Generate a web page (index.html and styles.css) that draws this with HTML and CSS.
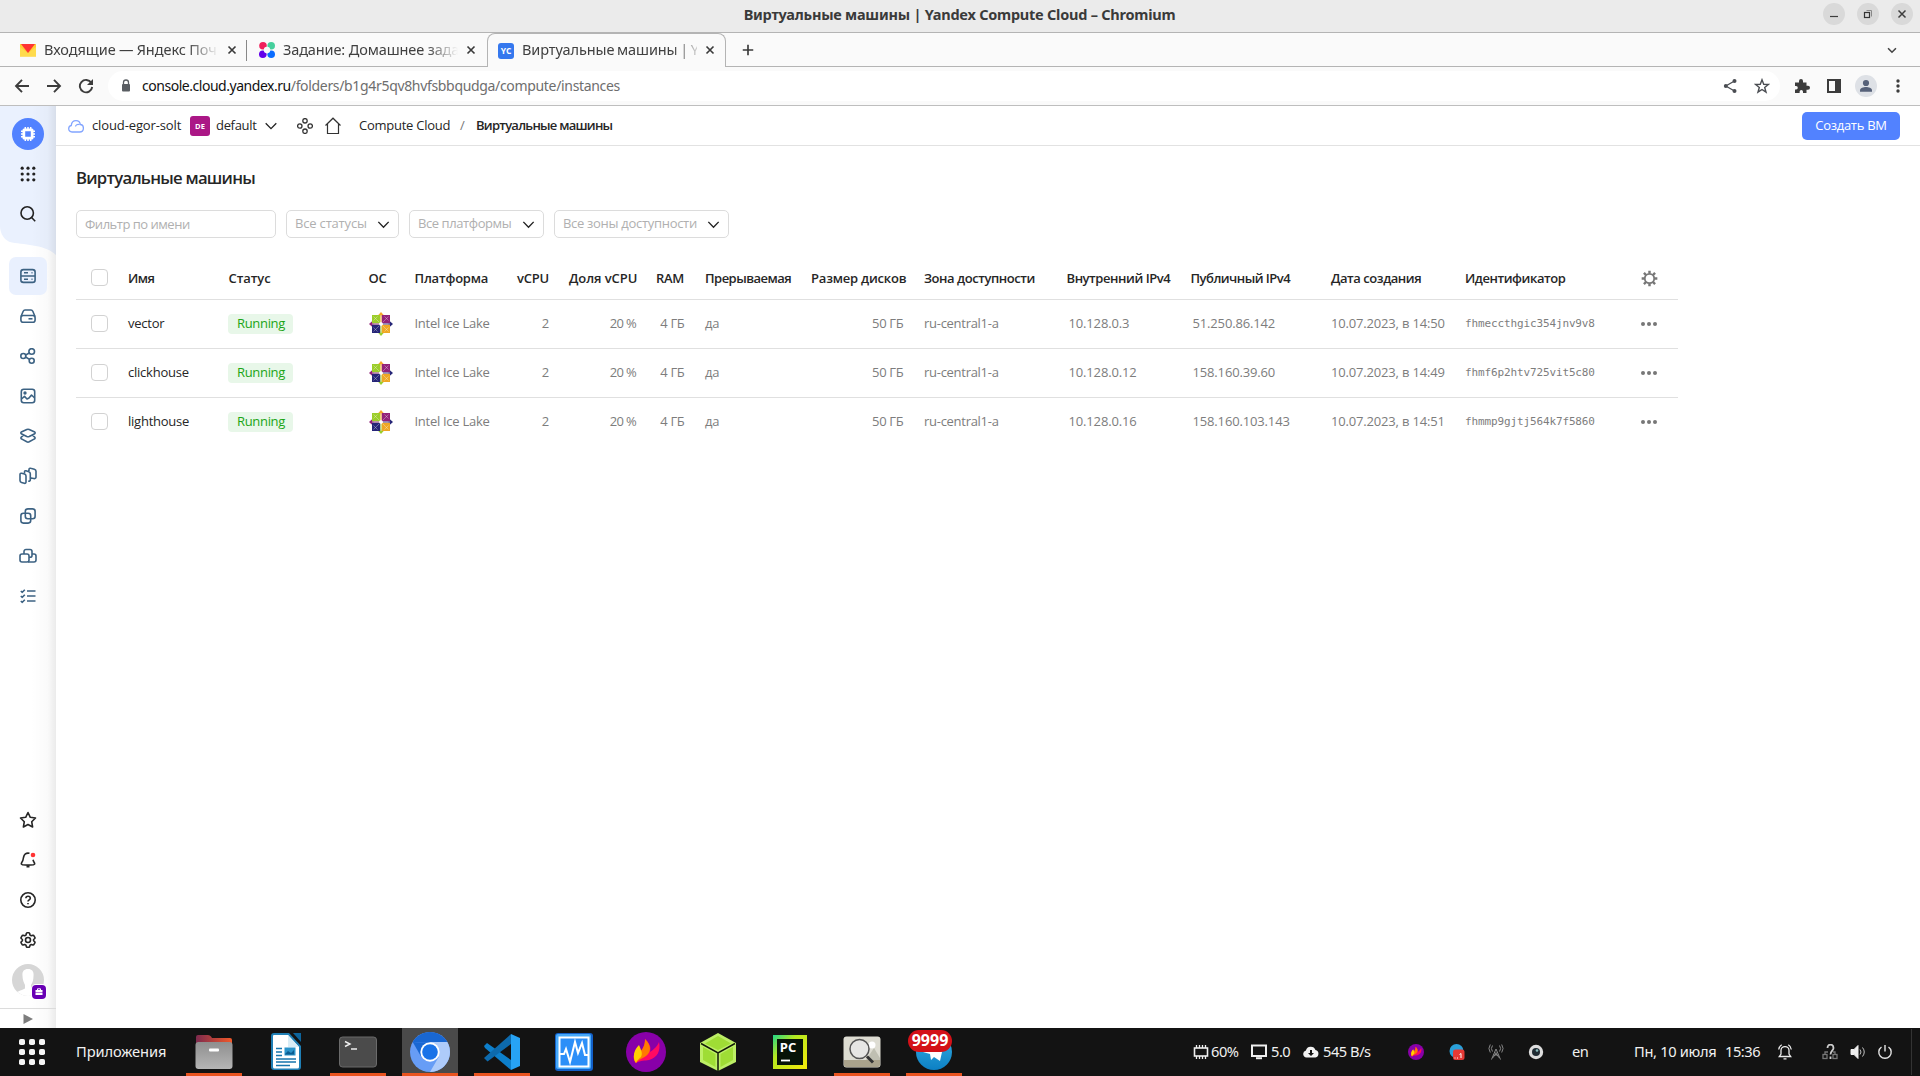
FILE: index.html
```html
<!DOCTYPE html>
<html lang="ru">
<head>
<meta charset="utf-8">
<title>Виртуальные машины | Yandex Compute Cloud</title>
<link rel="stylesheet" href="styles.css">
</head>
<body>
<svg class="defs" aria-hidden="true">
  <symbol id="chev" viewBox="0 0 16 16"><path d="M2.500 5.200L8 10.800l5.500-5.600" fill="none" stroke="currentColor" stroke-width="1.500"/></symbol>
  <symbol id="x" viewBox="0 0 16 16"><path d="M4 4l8 8M12 4l-8 8" fill="none" stroke="currentColor" stroke-width="1.9"/></symbol>
  <symbol id="centos" viewBox="0 0 24 24">
    <path d="M12 0l4 4.500H8z" fill="#f4a72b"/><path d="M24 12l-4.500 4V8z" fill="#262577"/><path d="M12 24l-4-4.500h8z" fill="#9ccd2a"/><path d="M0 12l4.500-4v8z" fill="#932279"/>
    <path d="M3 3h8.500v8.500H3z" fill="#9ccd2a"/><path d="M12.500 3H21v8.500h-8.500z" fill="#932279"/><path d="M3 12.500h8.500V21H3z" fill="#262577"/><path d="M12.500 12.500H21V21h-8.500z" fill="#efa724"/>
    <path d="M11.300 3h1.400v7h-1.400z" fill="#f7c87b"/><path d="M3 11.300h7v1.400H3z" fill="#b977a9"/><path d="M14 11.300h7v1.400h-7z" fill="#7f7fb4"/><path d="M11.300 14h1.400v7h-1.400z" fill="#c5e285"/>
    <path d="M4.500 4.500l6 6M13.500 13.500l6 6M19.500 4.500l-6 6M10.500 13.500l-6 6M4.500 8.500l4-4M19.500 8.500l-4-4M4.500 15.500l4 4M19.500 15.500l-4 4" stroke="#fff" stroke-opacity=".45" stroke-width=".7"/><path d="M12 9.800l2.200 2.200-2.200 2.200L9.800 12z" fill="#fff"/>
  </symbol>
  <symbol id="flame" viewBox="0 0 40 40"><circle cx="20" cy="20" r="20" fill="#8800a8"/><path d="M10 31C6 27 8 20 12 15c1 3 1 4 1 6 4-4 6-8 6-14 6 6 6 9 5 13 4-3 7-5 9-10 2 9-2 16-10 18-4 1-8 0-13 3z" fill="#ff0a62"/><path d="M10 31C6 27 8 20 12 15c1 3 1 4 1 6 4-4 6-8 6-14 7 7 6 13 1 17-4 3-7 3-10 7z" fill="#ff7a00"/><path d="M10 31C6 25 8 18 13 13c2 5 4 8 2 12-2 2-4 3-5 6z" fill="#ffd000"/></symbol>
</svg>

<header class="titlebar">
  <span class="titlebar-text">Виртуальные машины | Yandex Compute Cloud – Chromium</span>
  <div class="winbtns">
    <i><svg viewBox="0 0 22 22"><path d="M7 13.500h8" stroke="#3d3d3d" stroke-width="1.200"/></svg></i>
    <i><svg viewBox="0 0 22 22" fill="none"><path d="M9.500 7.500h5v6" stroke="#888"/><rect x="7.500" y="9.500" width="5" height="5" stroke="#333" stroke-width="1.200"/></svg></i>
    <i><svg viewBox="0 0 22 22"><path d="M7.500 7.500l7 7M14.500 7.500l-7 7" stroke="#3d3d3d" stroke-width="1.500"/></svg></i>
  </div>
</header>

<nav class="tabs">
  <div class="tab">
    <svg class="fav" viewBox="0 0 16 16"><path d="M0 2h16v12.500H0z" fill="#ffcc33"/><path d="M0 14.500V5l8 6 8-6v9.500z" fill="#ffdb4d"/><path d="M1 2h14l-7 9z" fill="#f33"/></svg>
    <span class="tab-text t1">Входящие — Яндекс Поч</span><svg class="close"><use href="#x"/></svg>
  </div>
  <div class="tab second">
    <svg class="fav" viewBox="0 0 16 16"><circle cx="4" cy="3.800" r="3.800" fill="#f0205c"/><circle cx="12.200" cy="3.800" r="3.800" fill="#45cf9c"/><circle cx="3.800" cy="12.200" r="3.800" fill="#6200ea"/><circle cx="12.200" cy="12.200" r="3.800" fill="#0a6cff"/><circle cx="8" cy="8" r="3.200" fill="#fafafa"/></svg>
    <span class="tab-text t2">Задание: Домашнее зада</span><svg class="close"><use href="#x"/></svg>
  </div>
  <div class="tab active">
    <span class="fav yc">YC</span>
    <span class="tab-text t3">Виртуальные машины | Y</span><svg class="close"><use href="#x"/></svg>
  </div>
  <svg class="plus" viewBox="0 0 16 16"><path d="M8 2v12M2 8h12" stroke="#3a3a3a" stroke-width="1.900"/></svg>
  <svg class="tabs-chev" viewBox="0 0 16 16"><path d="M3.500 6L8 10.500 12.500 6" fill="none" stroke="#444" stroke-width="1.800"/></svg>
</nav>

<div class="toolbar">
  <svg class="tb" viewBox="0 0 16 16"><path d="M15 8H2.500M8 1.800L2 8l6 6.200" fill="none" stroke="#3c3c3c" stroke-width="1.900"/></svg>
  <svg class="tb" viewBox="0 0 16 16"><path d="M1 8h12.500M8 1.800L14 8l-6 6.200" fill="none" stroke="#3c3c3c" stroke-width="1.900"/></svg>
  <svg class="tb" viewBox="0 0 16 16"><path d="M13.300 4.800A6.200 6.200 0 1 0 14.200 9" fill="none" stroke="#3c3c3c" stroke-width="1.900"/><path d="M15 1v6H9z" fill="#3c3c3c"/></svg>
  <div class="omnibox">
    <svg class="lock" viewBox="0 0 10 14"><path d="M2.500 6V3.500a2.500 2.500 0 0 1 5 0V6" fill="none" stroke="#5a5e63" stroke-width="1.300"/><rect x="1" y="5" width="8" height="7.500" rx="1" fill="#5a5e63"/></svg>
    <span class="host">console.cloud.yandex.ru</span><span class="path">/folders/b1g4r5qv8hvfsbbqudga/compute/instances</span>
    <svg class="share" viewBox="0 0 16 16"><path d="M12.500 3L3.800 8l8.700 5" fill="none" stroke="#4a4d52" stroke-width="1.300"/><circle cx="12.500" cy="3" r="2" fill="#4a4d52"/><circle cx="3.800" cy="8" r="2" fill="#4a4d52"/><circle cx="12.500" cy="13" r="2" fill="#4a4d52"/></svg>
    <svg class="star" viewBox="0 0 16 16"><path d="M8 1.800l1.700 4.500 4.700.2-3.700 3 1.300 4.700L8 11.500l-4 2.700 1.300-4.700-3.700-3 4.700-.2z" fill="none" stroke="#4a4d52" stroke-width="1.400"/></svg>
  </div>
  <svg class="tb puzzle" viewBox="0 0 16 16"><path d="M1 4.500h4V3a2 2 0 0 1 4 0v1.500h3.500v3.300H14a2 2 0 0 1 0 4h-1.500V15H9v-1.200a1.700 1.700 0 0 0-3.400 0V15H1v-3.600h1.100a1.700 1.700 0 0 0 0-3.400H1z" fill="#3c3c3c"/></svg>
  <svg class="tb" viewBox="0 0 16 16"><path d="M1 1h14v14H1zM3 3v10h6V3z" fill="#3c3c3c" fill-rule="evenodd"/></svg>
  <svg class="user" viewBox="0 0 22 22"><circle cx="11" cy="11" r="11" fill="#dee1e6"/><circle cx="11" cy="8" r="3.100" fill="#566179"/><path d="M5 16.800v-1.500c0-2.500 3.500-3.300 6-3.300s6 .8 6 3.300v1.500z" fill="#566179"/></svg>
  <svg class="tb kebab" viewBox="0 0 16 16" fill="#3c3c3c"><circle cx="8" cy="3" r="1.700"/><circle cx="8" cy="8" r="1.700"/><circle cx="8" cy="13" r="1.700"/></svg>
</div>

<div class="page">
  <aside class="side">
    <svg class="side-bg" viewBox="0 0 56 150"><path d="M0 0h56v149C46 139 27 139 12 136.500 4 135 0 127 0 120z" fill="#eaf1fe"/></svg>
    <div class="side-shade"></div>
    <div class="side-col">
      <div class="slot"><svg class="chip" viewBox="0 0 32 32"><circle cx="16" cy="16" r="16" fill="#5282ff"/><path d="M13.300 9v14M16 9v14M18.700 9v14M9 13.300h14M9 16h14M9 18.700h14" stroke="#fff" stroke-width="1.500"/><rect x="10.500" y="10.500" width="11" height="11" rx="1.500" fill="#fff"/><path d="M13.200 13.200h5.600v5.600h-5.600z" fill="#5282ff"/></svg></div>
      <div class="slot"><svg viewBox="0 0 16 16" fill="#222"><circle cx="2.200" cy="2.200" r="1.600"/><circle cx="8" cy="2.200" r="1.600"/><circle cx="13.800" cy="2.200" r="1.600"/><circle cx="2.200" cy="8" r="1.600"/><circle cx="8" cy="8" r="1.600"/><circle cx="13.800" cy="8" r="1.600"/><circle cx="2.200" cy="13.800" r="1.600"/><circle cx="8" cy="13.800" r="1.600"/><circle cx="13.800" cy="13.800" r="1.600"/></svg></div>
      <div class="slot"><svg viewBox="0 0 16 16" fill="none" stroke="#222" stroke-width="1.600"><circle cx="7.200" cy="7" r="6.200"/><path d="M11.600 11.500l3.600 3.700"/></svg></div>
    </div>
    <div class="side-col menu">
      <div class="slot"><div class="sel"><svg viewBox="0 0 16 16"><rect x=".9" y="1.600" width="14.200" height="12.800" rx="2.500"/><path d="M1 8h14M4 4.800h4M4 11.200h4M11.500 4.800h1M11.500 11.200h1"/></svg></div></div>
      <div class="slot"><svg viewBox="0 0 16 16"><path d="M1 8.500L3.200 3.300C3.600 2.400 4.200 2 5 2h6c.8 0 1.400.4 1.800 1.300L15 8.500"/><rect x=".9" y="7.500" width="14.200" height="6.700" rx="2.300"/><path d="M8.500 10.800h4"/></svg></div>
      <div class="slot"><svg viewBox="0 0 16 16"><circle cx="3.300" cy="8" r="2.500"/><circle cx="11.700" cy="3.500" r="2.800"/><circle cx="11.700" cy="12.700" r="2.500"/><path d="M5.600 7L9.300 5M5.600 9l3.900 2.400"/></svg></div>
      <div class="slot"><svg viewBox="0 0 16 16"><rect x="1.300" y="1.300" width="13.400" height="13.400" rx="2.500"/><circle cx="5" cy="5" r=".9"/><path d="M1.500 11l3-2.600L7 11l2-1 2.500-3 3.200 3"/></svg></div>
      <div class="slot"><svg viewBox="0 0 16 16"><path d="M6.800 1.500L1.300 3.900c-.6.300-.6 1.500 0 1.800L6.800 8.500c.8.300 1.600.3 2.400 0l5.500-2.800c.6-.3.600-1.500 0-1.800L9.200 1.500c-.8-.3-1.600-.3-2.400 0zM3.300 7.500L1.300 9.200c-.6.500-.5 1.400.2 1.700l5.300 2.900c.8.400 1.600.4 2.400 0l5.300-2.900c.7-.3.800-1.200.2-1.700l-2-1.700"/></svg></div>
      <div class="slot"><svg class="big" viewBox="0 0 18 18"><path d="M1 7.500c0-1 .7-1.500 1.700-1.200l2.800.8c1 .3 1.500 1 1.500 2v6c0 1-.7 1.500-1.700 1.200l-2.800-.8C1.500 15.200 1 14.500 1 13.500z"/><path d="M5.500 6.500V5c0-1 .6-1.500 1.500-1.200l2.800.9c1 .3 1.500 1 1.500 2V13c0 1-1 1.300-2 1.100M10 4V2.500c0-1 .8-1.500 1.700-1.200l3.600 1c1 .3 1.700 1 1.700 2v6c0 1-1.200 1.500-2.200 1.200L12 11"/></svg></div>
      <div class="slot"><svg viewBox="0 0 16 16"><rect x="5.300" y=".9" width="9.800" height="9.800" rx="2.500"/><rect x=".9" y="5.300" width="9.800" height="9.800" rx="2.500"/></svg></div>
      <div class="slot"><svg class="big" viewBox="0 0 18 18"><rect x="1" y="7" width="9" height="8" rx="2"/><path d="M5 7V4.500c0-1.300.9-2 2-2h4c1.200 0 2 .8 2 2v4c0 1-.8 1.800-2 1.800h-1M13 7h2c1.200 0 2 .8 2 2v4c0 1.200-.8 2-2 2H9"/></svg></div>
      <div class="slot"><svg viewBox="0 0 16 16"><path d="M7 3h8.500M7 8h8.500M7 13h8.500M.8 3l1.500 1.300L4.800 1.700M.8 8l1.500 1.300L4.800 6.700M.8 13l1.500 1.300 2.500-2.600"/></svg></div>
    </div>
    <div class="side-col dark">
      <div class="slot"><svg class="big" viewBox="0 0 18 18"><path d="M9 1.500l2.300 4.800 5.200.7-3.800 3.700.9 5.300L9 13.500 4.400 16l.9-5.300L1.500 7l5.200-.7z"/></svg></div>
      <div class="slot"><svg viewBox="0 0 16 16"><path d="M9.500 1.300C6 .5 4 2.500 3.500 5.500 3.200 8.500 2.500 9.500 1.500 11c-.4.900 0 1.500 1 1.700 3.500.6 7.500.6 11 0 1-.2 1.400-.8 1-1.700-.7-1-1.200-2-1.500-3.200"/><path d="M6.500 14.700h3"/><circle cx="13" cy="3" r="2.300" fill="#ff3333" stroke="none"/></svg></div>
      <div class="slot"><svg viewBox="0 0 16 16"><circle cx="8" cy="8" r="7.200"/><path d="M5.900 6.300c0-2.800 4.400-2.700 4.400-.1 0 1.700-2.300 1.600-2.300 3.300M8 11v1.300"/></svg></div>
      <div class="slot"><svg viewBox="0 0 16 16"><path d="M6.300 1.500L7 .8h2l.7.7.3 1.600 1.300.7 1.600-.5.9.3 1.200 2-.2.900-1.200 1v1.200l1.200 1.100.2.900-1.200 2-.9.300-1.600-.5-1.300.7-.3 1.500-.7.600H7l-.7-.6-.3-1.500-1.300-.7-1.600.5-.9-.3-1.200-2 .2-.9 1.200-1.100V7.500l-1.200-1-.2-.9 1.200-2 .9-.3 1.600.5L6 3.100z"/><circle cx="8" cy="8" r="2.500"/></svg></div>
      <div class="slot"><div class="ava"><svg viewBox="0 0 32 32"><defs><clipPath id="cc"><circle cx="16" cy="16" r="16"/></clipPath></defs><g clip-path="url(#cc)" stroke="none"><path d="M0 0h32v32H0z" fill="#d6d6d6"/><path d="M16 5c-4.500 0-6 3-5.500 7 0 4 1.500 7 2.500 9v3.500C9 27 4 27 2 31v2h28v-2c-2-4-7-4-11-6.500V21c1.500-2 2.500-5 2.500-9C22 8 20.500 5 16 5z" fill="#fff"/></g></svg><i class="badge"><svg viewBox="0 0 14 14"><path d="M3.500 5h7v2.200h-7zM3.500 7.800h7V10h-7z" fill="#fff" stroke="none"/><path d="M5.500 5V3.800h3V5" stroke="#fff" stroke-width="1"/></svg></i></div></div>
    </div>
    <div class="play"><svg viewBox="0 0 10 10"><path d="M.5 0L10 5 .5 10z" fill="#7d7d7d"/></svg></div>
  </aside>

  <main class="main">
    <div class="crumbs">
      <svg class="c-cloud" viewBox="0 0 16 16"><path d="M4 14c-2 0-3.300-1.400-3.300-3.200S2 7.700 3.300 7.500C3.500 4.600 5.300 2.600 8 2.600c2.500 0 4 1.600 4.400 3.900 1.800.2 3 1.600 3 3.600 0 2.400-1.400 3.900-3.600 3.900zM7.500 8.500c.2-1.500 1.800-2.500 4-1.800" fill="none" stroke="#83a5ff" stroke-width="1.300"/></svg>
      <span class="c1">cloud-egor-solt</span>
      <span class="de">DE</span>
      <span class="c2">default</span>
      <svg class="c-chev" viewBox="0 0 12 8"><path d="M.7 1.200L6 6.600l5.300-5.400" fill="none" stroke="#222" stroke-width="1.300"/></svg>
      <svg class="c-four" viewBox="0 0 16 16" fill="none" stroke="#333" stroke-width="1.300"><circle cx="8" cy="2.800" r="2.200"/><circle cx="2.800" cy="8" r="2.200"/><circle cx="13.200" cy="8" r="2.200"/><circle cx="8" cy="13.200" r="2.200"/></svg>
      <svg class="c-home" viewBox="0 0 16 18"><path d="M.5 8.500L8 1.200l7.500 7.300M2.500 7v9.500h11V7" fill="none" stroke="#333" stroke-width="1.200"/></svg>
      <span class="c3">Compute Cloud</span><span class="slash">/</span><b class="c4">Виртуальные машины</b>
      <button class="create">Создать ВМ</button>
    </div>
    <h1>Виртуальные машины</h1>
    <div class="filters">
      <div class="field f0">Фильтр по имени</div>
      <div class="field f1"><span>Все статусы</span><svg><use href="#chev"/></svg></div>
      <div class="field f2"><span>Все платформы</span><svg><use href="#chev"/></svg></div>
      <div class="field f3"><span>Все зоны доступности</span><svg><use href="#chev"/></svg></div>
    </div>
    <div class="table">
      <div class="row head"><span class="ck"><i></i></span><span class="w2">Имя</span><span class="w0">Статус</span><span>ОС</span><span class="w1">Платформа</span><span class="r">vCPU</span><span class="r w0">Доля vCPU</span><span class="r w4">RAM</span><span class="w2">Прерываемая</span><span class="r">Размер дисков</span><span class="w3">Зона доступности</span><span class="w3">Внутренний IPv4</span><span class="w2">Публичный IPv4</span><span class="w3">Дата создания</span><span class="w3">Идентификатор</span><span class="act"><svg class="gear" viewBox="0 0 18 18" fill="none" stroke="#777"><circle cx="9" cy="9" r="5" stroke-width="1.900"/><path d="M9 .7v3M9 14.300v3M.7 9h3M14.300 9h3M3.100 3.100l2.200 2.200M12.700 12.700l2.200 2.200M14.900 3.100l-2.200 2.200M5.300 12.700l-2.200 2.200" stroke-width="2.600"/></svg></span></div>
      <div class="row"><span class="ck"><i></i></span><span class="name">vector</span><span class="st"><em>Running</em></span><span class="os"><svg><use href="#centos"/></svg></span><span class="ice">Intel Ice Lake</span><span class="r">2</span><span class="r pc">20 %</span><span class="r gb">4 ГБ</span><span>да</span><span class="r gb">50 ГБ</span><span class="ice">ru-central1-a</span><span class="ip">10.128.0.3</span><span class="ip">51.250.86.142</span><span class="ice n">10.07.2023, в 14:50</span><span class="id">fhmeccthgic354jnv9v8</span><span class="act"><b></b><b></b><b></b></span></div>
      <div class="row"><span class="ck"><i></i></span><span class="name">clickhouse</span><span class="st"><em>Running</em></span><span class="os"><svg><use href="#centos"/></svg></span><span class="ice">Intel Ice Lake</span><span class="r">2</span><span class="r pc">20 %</span><span class="r gb">4 ГБ</span><span>да</span><span class="r gb">50 ГБ</span><span class="ice">ru-central1-a</span><span class="ip">10.128.0.12</span><span class="ip">158.160.39.60</span><span class="ice n">10.07.2023, в 14:49</span><span class="id">fhmf6p2htv725vit5c80</span><span class="act"><b></b><b></b><b></b></span></div>
      <div class="row"><span class="ck"><i></i></span><span class="name">lighthouse</span><span class="st"><em>Running</em></span><span class="os"><svg><use href="#centos"/></svg></span><span class="ice">Intel Ice Lake</span><span class="r">2</span><span class="r pc">20 %</span><span class="r gb">4 ГБ</span><span>да</span><span class="r gb">50 ГБ</span><span class="ice">ru-central1-a</span><span class="ip">10.128.0.16</span><span class="ip">158.160.103.143</span><span class="ice n">10.07.2023, в 14:51</span><span class="id">fhmmp9gjtj564k7f5860</span><span class="act"><b></b><b></b><b></b></span></div>
    </div>
  </main>
</div>

<footer class="dock">
  <svg class="apps" viewBox="0 0 26 26" fill="#f5f5f5"><rect width="6" height="6" rx="1.800"/><rect x="10" width="6" height="6" rx="1.800"/><rect x="20" width="6" height="6" rx="1.800"/><rect y="10" width="6" height="6" rx="1.800"/><rect x="10" y="10" width="6" height="6" rx="1.800"/><rect x="20" y="10" width="6" height="6" rx="1.800"/><rect y="20" width="6" height="6" rx="1.800"/><rect x="10" y="20" width="6" height="6" rx="1.800"/><rect x="20" y="20" width="6" height="6" rx="1.800"/></svg>
  <span class="apps-text">Приложения</span>
  <div class="launch">
    <div class="app run"><svg viewBox="0 0 40 40"><defs><linearGradient id="g1"><stop stop-color="#7d2a4e"/><stop offset="1" stop-color="#f1592a"/></linearGradient><linearGradient id="g2" x2="0" y2="1"><stop stop-color="#8f8f8f"/><stop offset="1" stop-color="#b5b5b5"/></linearGradient></defs><path d="M2 5q0-2 2-2h10q2 0 3 1.500L18 6h18q2 0 2 2v10H2z" fill="url(#g1)"/><rect x="1.500" y="10" width="37" height="27" rx="3" fill="url(#g2)"/><rect x="15" y="16.500" width="10" height="3" rx="1" fill="#fff"/></svg></div>
    <div class="app"><svg viewBox="0 0 40 40"><path d="M8 1h15l12 13v21q0 3-3 3H8q-3 0-3-3V4q0-3 3-3z" fill="#1f7fb5"/><path d="M27 1h8v9z" fill="#0d649c"/><path d="M8 3h14l11 12v20q0 1.500-1.500 1.500H8.500Q7 36.500 7 35V4q0-1 1-1z" fill="#fff"/><path d="M22 3l11 12H22z" fill="#d9edf6"/><path d="M10 16.500h6M10 20h6M10 23.500h6M10 27h20M10 30h20M10 33.500h14" stroke="#1676ad" stroke-width="1.500"/><rect x="18.500" y="15.500" width="11" height="8" fill="#2b94ca"/><path d="M19 22l3-3 3 2 3-3v4.500h-9z" fill="#0b5d91"/></svg></div>
    <div class="app run"><svg viewBox="0 0 40 40"><rect x="1.500" y="5" width="37" height="30" rx="3" fill="#4b4b4b" stroke="#6b6b6b"/><path d="M7 9.500l5 2.500-5 2.500M13 17h6" fill="none" stroke="#eee" stroke-width="1.400"/></svg></div>
    <div class="app run on"><svg viewBox="0 0 40 40"><circle cx="20" cy="20" r="20" fill="#679df6"/><path d="M2.700 10A20 20 0 0 1 37.300 10L20 11z" fill="#1967d2"/><path d="M2.700 10L11.300 25 20 11z" fill="#1967d2"/><path d="M37.300 10H20l8.700 15L20 40a20 20 0 0 0 17.300-30z" fill="#aecbfa"/><circle cx="20" cy="20" r="9.700" fill="#fff"/><circle cx="20" cy="20" r="7.800" fill="#1a73e8"/></svg></div>
    <div class="app run"><svg viewBox="0 0 40 40"><path d="M2 14l3-3 24 17v10L3 16z" fill="#0d7fcb"/><path d="M2 26l3.500 3.500L29 12V2z" fill="#0d6aad"/><path d="M29 2l9 4v28l-9 4z" fill="#27a3f5"/></svg></div>
    <div class="app"><svg viewBox="0 0 40 40"><rect x="1" y="1" width="38" height="38" rx="3" fill="#1260c8"/><rect x="2" y="2" width="35" height="35" rx="2" fill="#45a8fa"/><rect x="5.500" y="5.500" width="29" height="29" fill="#2c8ff8" stroke="#fff" stroke-width="2"/><path d="M6 22h4l2-5 4 13 5-20 3 11 4-10 3 12h4" fill="none" stroke="#fff" stroke-width="2"/></svg></div>
    <div class="app"><svg viewBox="0 0 40 40"><use href="#flame"/></svg></div>
    <div class="app"><svg viewBox="0 0 40 40"><path d="M20 1l18 10v19L20 39 2 30V11z" fill="#bdef66"/><path d="M20 4l13 7.500L20 18 7 11.500zM5 15l12.500 7v13L5 28zM35 15l-12.500 7v13L35 28z" fill="#9fdd35"/><path d="M3 11.500L20 21l17-9.500M20 21v18" stroke="#121a08" stroke-width="1.500" fill="none"/></svg></div>
    <div class="app"><svg class="pyc" viewBox="0 0 34 34"><defs><linearGradient id="g3" x2="1" y2="1"><stop stop-color="#21d789"/><stop offset=".35" stop-color="#b5e820"/><stop offset="1" stop-color="#f5ea0a"/></linearGradient></defs><path d="M0 0h34v34H0z" fill="url(#g3)"/><path d="M4 4h26v26H4z" fill="#071407"/><text x="6.800" y="17" class="pct">PC</text><path d="M8 25.500h9" stroke="#fff" stroke-width="1.800"/></svg></div>
    <div class="app run"><svg viewBox="0 0 40 40"><rect x="1.500" y="4.500" width="37" height="31" rx="3" fill="#dddcd2"/><path d="M2 28h36v5q0 2-2 2H4q-2 0-2-2z" fill="#aaa38c"/><path d="M24 28l8-12 6 10v2z" fill="#bfbfb2"/><circle cx="30" cy="13" r="3.500" fill="#fff"/><circle cx="17.500" cy="17" r="9.500" fill="#e9e9e9" fill-opacity=".8" stroke="#555" stroke-width="1.500"/><path d="M25 24.500l6 6" stroke="#333" stroke-width="3"/></svg></div>
    <div class="app run tg"><svg viewBox="0 0 40 40"><defs><linearGradient id="g4" x2="0" y2="1"><stop stop-color="#37aee2"/><stop offset="1" stop-color="#0c80c4"/></linearGradient></defs><circle cx="20" cy="20" r="18" fill="url(#g4)"/><path d="M9 20l21-9-4 18-6-4-3 3-1-6z" fill="#fff"/></svg><span class="cnt">9999</span></div>
  </div>
  <div class="tray">
    <svg viewBox="0 0 16 16" fill="none" stroke="#eee"><rect x="1.500" y="4" width="13" height="8" stroke-width="1.600"/><path d="M3.500 1v3M6.500 1v3M9.500 1v3M12.500 1v3M3.500 12v3M6.500 12v3M9.500 12v3M12.500 12v3" stroke-width="1.300"/></svg>
    <span class="s1">60%</span>
    <svg viewBox="0 0 16 16" fill="none" stroke="#eee"><rect x="1" y="1.500" width="14" height="10.500" stroke-width="2"/><path d="M5 14.200h6" stroke-width="2"/></svg>
    <span class="s1">5.0</span>
    <svg viewBox="0 0 16 16"><path d="M3.500 13.500a3.500 3.500 0 0 1-.6-6.900 5 5 0 0 1 9.600-.5 3.800 3.800 0 0 1 0 7.400z" fill="#f2f2f2"/><path d="M7 6h2v3h2l-3 3-3-3h2z" fill="#131313"/></svg>
    <span class="s1">545 B/s</span>
    <svg viewBox="0 0 40 40"><use href="#flame"/></svg>
    <svg viewBox="0 0 16 16"><circle cx="7.500" cy="7" r="7" fill="#2a9fd8"/><rect x="4" y="5.500" width="11.500" height="10.500" rx="2.500" fill="#e53935"/><path d="M12 14V9.500l-1.500 1M5.500 14h1M8 14h1" stroke="#fff" fill="none"/></svg>
    <svg viewBox="0 0 16 16" fill="none" stroke="#888"><path d="M8 5L3.500 15.500M8 5l4.500 10.500M5.500 11h5M6.500 8l5 6M9.500 8l-5 6M4.500 1.500a5 5 0 0 0 0 6M11.500 1.500a5 5 0 0 1 0 6M2.300.5a7 7 0 0 0 0 8M13.700.5a7 7 0 0 1 0 8"/></svg>
    <svg viewBox="0 0 16 16"><circle cx="8" cy="8" r="7.200" fill="#ddd"/><circle cx="8" cy="8" r="4" fill="#202b33"/><circle cx="9" cy="6.500" r="1.300" fill="#8bb"/></svg>
    <span class="lang">en</span>
    <span class="s2">Пн, 10 июля</span>
    <span class="s1">15:36</span>
    <svg viewBox="0 0 16 16" fill="none" stroke="#eee" stroke-width="1.300"><path d="M2.300 12.500h11.400L12 10V6.200C12 1.300 4 1.300 4 6.200V10zM6.500 14.800h3M1.700 5.500C2 3.300 3 1.700 4.700.8M14.300 5.500C14 3.300 13 1.700 11.300.8"/></svg>
    <svg viewBox="0 0 16 16" fill="none" stroke="#777" stroke-width="1.300"><rect x="1" y="10.500" width="4" height="4"/><rect x="11" y="10.500" width="4" height="4"/><path d="M3 10V8h3M13 10V8h-2"/><path d="M5.500 4c0-4.500 6-4.500 6 0 0 2.500-3 3-3 6.500M8.500 12.500v2.500" stroke="#ccc" stroke-width="1.800"/></svg>
    <svg viewBox="0 0 16 16" fill="none" stroke="#eee"><path d="M1 5.500h3l4-4v13l-4-4H1z" fill="#eee"/><path d="M10 5.500q2 2.500 0 5M12.500 3.500q3.500 4.500 0 9" stroke-opacity=".8"/></svg>
    <svg viewBox="0 0 16 16" fill="none" stroke="#e5e5e5" stroke-width="1.400"><path d="M4.500 3a6.200 6.200 0 1 0 7 0M8 1v6.500"/></svg>
  </div>
</footer>
</body>
</html>
```
FILE: styles.css
```css
* { box-sizing: border-box; }
html, body { margin: 0; height: 1076px; overflow: hidden; }
body { display: flex; flex-direction: column; background: #fff; font-family: "Open Sans", "Noto Sans", sans-serif; font-size: 13px; color: #262626; white-space: nowrap; }
svg { display: block; flex: none; }
.defs { position: absolute; width: 0; height: 0; }

/* window title */
.titlebar { height: 33px; background: #ebebeb; border-bottom: 1px solid #b4b4b4; display: grid; grid-template-columns: 1fr auto 1fr; padding: 0 7px 0 6px; font: 700 14.5px/29px "Noto Sans", sans-serif; letter-spacing: -.24px; color: #3a3a3a; }
.titlebar-text { grid-column: 2; }
.winbtns { display: flex; gap: 12px; justify-content: flex-end; padding-top: 3px; }
.winbtns i { width: 22px; height: 22px; border-radius: 50%; background: #d9d9d9; }
.winbtns svg { width: 22px; height: 22px; }

/* tab strip */
.tabs { height: 34px; background: #fafafa; display: flex; align-items: stretch; box-shadow: inset 0 -1px #b4b4b4; }
.tab { display: flex; align-items: center; width: 248px; padding: 0 8px 0 20px; border-right: 1px solid transparent; position: relative; }
.tab:first-child::after { content: ""; position: absolute; right: 0; top: 7px; width: 1px; height: 21px; background: #888; }
.tab.second { width: 239px; padding-left: 11px; }
.tab.active { width: 239px; padding-left: 10px; background: #fafafa; border: 1px solid #b4b4b4; border-bottom: 0; border-radius: 8px 8px 0 0; }
.fav { width: 16px; height: 16px; margin-right: 8px; flex: none; }
.yc { background: #3578ee; color: #fff; border-radius: 3px; font: 700 8.5px/16px "Open Sans", sans-serif; text-align: center; }
.tab-text { width: 175px; overflow: hidden; font: 14.5px/32px "Noto Sans", sans-serif; padding-bottom: 2px; color: #404040; -webkit-mask-image: linear-gradient(90deg, #000 82%, transparent 100%); mask-image: linear-gradient(90deg, #000 82%, transparent 100%); }
.active .tab-text { padding-bottom: 3px; }
.active .close { margin-bottom: 2px; }
.t1 { letter-spacing: -.04px; word-spacing: -.5px; }
.t2 { letter-spacing: -.12px; }
.t3 { letter-spacing: -.1px; word-spacing: -1px; -webkit-mask-image: linear-gradient(90deg, #000 86%, transparent 104%); mask-image: linear-gradient(90deg, #000 86%, transparent 104%); }
.close { width: 14px; height: 14px; margin-left: 6px; color: #3a3a3a; }
.plus { width: 14px; height: 14px; align-self: center; margin-left: 15px; }
.tabs-chev { width: 14px; height: 14px; align-self: center; margin: 0 21px 0 auto; }

/* address row */
.toolbar { height: 39px; background: #fafafa; border-bottom: 1px solid #bebebe; display: flex; align-items: center; padding-left: 14px; }
.tb { width: 16px; height: 16px; margin-right: 16px; }
.toolbar .tb:nth-child(3) { margin-right: 14px; }
.omnibox { flex: none; width: 1672px; height: 30px; border-radius: 15px; background: #fff; display: flex; align-items: center; padding-left: 13px; font: 14px/28px "Noto Sans", sans-serif; }
.lock { width: 10px; height: 14px; margin-right: 11px; }
.host { letter-spacing: -.47px; color: #111; }
.path { letter-spacing: -.33px; color: #6e6e6e; }
.share, .star { width: 16px; height: 16px; }
.share { margin-left: auto; }
.star { margin: 0 10px 0 16px; }
.puzzle { margin-left: 14px; }
.user { width: 22px; height: 22px; margin: 0 13px 0 -3px; }
.toolbar .kebab { margin-right: 0; }

/* console */
.page { height: 922px; display: flex; }
.side { width: 56px; position: relative; display: flex; flex-direction: column; background: #fff; }
.side-bg { position: absolute; left: 0; top: 0; width: 56px; height: 150px; }
.side-shade { position: absolute; inset: 0; background: linear-gradient(90deg, rgba(0,0,0,0) 55%, rgba(0,0,0,.02) 85%, rgba(0,0,0,.08)); }
.side-col { position: relative; padding-top: 8px; }
.slot { height: 40px; display: grid; place-items: center; }
.slot svg { width: 16px; height: 16px; }
.slot .chip { width: 32px; height: 32px; }
.slot .big { width: 18px; height: 18px; }
.menu { padding-top: 22px; }
.menu svg, .dark svg { fill: none; stroke: #3c6283; stroke-width: 1.6; stroke-linejoin: round; }
.dark svg { stroke: #262626; stroke-width: 1.6; }
.sel { width: 38px; height: 38px; border-radius: 7px; background: #e9f0fe; display: grid; place-items: center; }
.dark { margin-top: auto; }
.ava { position: relative; width: 32px; height: 32px; }
.slot .ava > svg { width: 32px; height: 32px; }
.badge { position: absolute; left: 20px; top: 21px; width: 14px; height: 14px; border-radius: 4px; background: #6800b4; box-shadow: 0 0 0 1px #fff; }
.slot .badge svg { width: 14px; height: 14px; }
.play { position: relative; height: 20px; margin-top: 8px; border-top: 1px solid #dcdcdc; padding: 5px 0 0 23px; }
.play svg { width: 10px; height: 10px; }

.main { flex: 1; }
.crumbs { height: 40px; border-bottom: 1px solid #e2e2e2; display: flex; align-items: center; padding: 0 20px 0 12px; line-height: 36px; }
.crumbs > span:not(.de), .crumbs > b { padding-bottom: 2px; }
.c-cloud { width: 16px; height: 16px; margin-right: 8px; }
.c1 { width: 98px; letter-spacing: -.12px; }
.de { width: 20px; height: 20px; border-radius: 3px; background: #ab1786; color: #fff; font: 700 7.5px/20px "Open Sans", sans-serif; text-align: center; margin-right: 6px; }
.c2 { width: 49px; letter-spacing: -.32px; }
.c-chev { width: 12px; height: 8px; margin-right: 20px; }
.c-four { width: 16px; height: 16px; margin-right: 12px; }
.c-home { width: 16px; height: 18px; margin-right: 18px; }
.c3 { width: 101px; letter-spacing: -.26px; }
.slash { width: 16px; color: #777; }
.c4 { font-weight: 600; letter-spacing: -.75px; }
.create { margin: 0 0 0 auto; width: 98px; height: 28px; padding: 0 0 2px; border: 0; border-radius: 5px; background: #5282ff; color: #fff; font: 13px/26px "Open Sans", sans-serif; letter-spacing: -.28px; }
h1 { margin: 20px 0 0 20px; height: 24px; font-size: 16.7px; line-height: 24px; font-weight: 550; letter-spacing: -.74px; }
.filters { display: flex; gap: 10px; padding: 20px 0 0 20px; }
.field { height: 28px; border: 1px solid #dcdcdc; border-radius: 5px; padding: 0 7px 0 8px; display: flex; align-items: center; justify-content: space-between; color: #b0b0b0; line-height: 26px; }
.field span { padding-bottom: 2px; line-height: 24px; }
.field svg { width: 15px; height: 15px; color: #222; }
.f0 { width: 200px; letter-spacing: -.49px; }
.f1 { width: 113px; letter-spacing: -.18px; }
.f2 { width: 135px; letter-spacing: -.42px; }
.f3 { width: 175px; letter-spacing: -.3px; }
.table { width: 1602px; margin: 20px 0 0 20px; }
.row { display: grid; height: 49px; grid-template-columns: 42px 100.5px 140px 46px 101.5px 53px 87px 49px 106px 113px 142.5px 124px 140.5px 134px 165px 58px; align-items: center; border-bottom: 1px solid #e0e0e0; color: #7d7d7d; line-height: 20px; letter-spacing: -.24px; }
.row:last-child { border-bottom-color: transparent; }
.row > span { padding: 0 10px 2px; }
.row > .r { text-align: right; }
.head { height: 42px; color: #262626; letter-spacing: -.2px; font-weight: 550; }
.head .w0 { letter-spacing: -.08px; }
.head .w2 { letter-spacing: -.52px; }
.head .w3 { letter-spacing: -.44px; }
.row > .w4 { letter-spacing: -.3px; padding-right: 11px; }
.row > .ck { padding: 0 0 1px 15px; }
.head > .ck { padding-bottom: 2px; }
.ck i { display: block; width: 17px; height: 17px; border: 1px solid #d2d2d2; border-radius: 4px; background: #fff; }
.row > .name { color: #262626; }
.row > .st { padding-bottom: 0; }
em { display: block; width: 65px; height: 20px; margin-left: -.5px; padding: 0 0 0 9px; line-height: 19px; border-radius: 4px; background: #e8f7e9; color: #1ba516; font-style: normal; letter-spacing: -.32px; }
.row > .os { padding-bottom: 0; }
.os svg { width: 24px; height: 24px; }
.ice { letter-spacing: -.28px; }
.n { letter-spacing: -.17px; }
.pc { letter-spacing: -.7px; }
.row > .gb { letter-spacing: -.3px; padding-right: 10.5px; }
.row > .ip { padding-left: 12px; letter-spacing: -.15px; }
.row > .id { padding-bottom: 0; font: 11px/20px "DejaVu Sans Mono", "Liberation Mono", monospace; letter-spacing: -.13px; }
.row > .act { display: flex; justify-content: center; gap: 2px; padding-bottom: 0; }
.gear { width: 17px; height: 17px; }
.act b { width: 4px; height: 4px; border-radius: 50%; background: #777; }

/* desktop panel */
.dock { height: 48px; background: #131313; display: flex; align-items: center; padding-left: 19px; color: #f0f0f0; font: 14.67px/44px "Noto Sans", sans-serif; }
.dock span { padding-bottom: 2px; }
.apps { width: 26px; height: 26px; margin-right: 31px; }
.apps-text { width: 110px; letter-spacing: -.1px; }
.launch { display: flex; gap: 16px; width: 1007px; }
.app { width: 56px; height: 48px; display: grid; place-items: center; position: relative; }
.app svg { width: 40px; height: 40px; }
.app .pyc { width: 34px; height: 34px; }
.pct { font: 700 13px "Open Sans", sans-serif; fill: #fff; }
.run { box-shadow: inset 0 -3px #e95420; }
.on { background: #4a4a4a; }
.cnt { position: absolute; left: 2px; top: 2px; width: 44px; height: 22px; border-radius: 11px; background: #d41118; color: #fff; text-align: center; font: 700 16px/20px "Noto Sans", sans-serif; }
.tray { display: grid; grid-template-columns: 18px 40px 20px 32px 20px 85px 41px 39px 40px 44px 62px 91px 52px 45px 28px 27px 16px; align-items: center; padding-right: 18px; border-right: 1px solid #333; }
.tray svg { width: 16px; height: 16px; }
.s1 { letter-spacing: -.47px; }
.s2 { letter-spacing: -.32px; }
.lang { letter-spacing: -.6px; }
```
